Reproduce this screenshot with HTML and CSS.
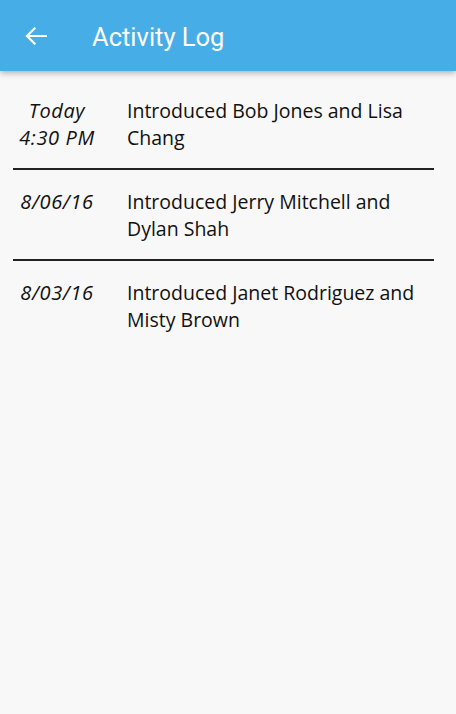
FILE: index.html
```html
<!DOCTYPE html>
<html lang="en">
<head>
<meta charset="utf-8">
<title>Activity Log</title>
<link rel="stylesheet" href="styles.css">
</head>
<body>
<header class="appbar">
  <button class="back" aria-label="Back">
    <svg width="22" height="18" viewBox="0 0 22 18"><path d="M21 9H2M9.5 1.5L2 9l7.5 7.5" fill="none" stroke="#fff" stroke-width="2.2" stroke-linecap="square"/></svg>
  </button>
  <h1 class="title">Activity Log</h1>
</header>
<main class="log">
  <div class="entry">
    <div class="when">Today<br>4:30 PM</div>
    <div class="what">Introduced Bob Jones and Lisa Chang</div>
  </div>
  <div class="entry">
    <div class="when">8/06/16</div>
    <div class="what">Introduced Jerry Mitchell and Dylan Shah</div>
  </div>
  <div class="entry">
    <div class="when">8/03/16</div>
    <div class="what">Introduced Janet Rodriguez and Misty Brown</div>
  </div>
</main>
</body>
</html>
```

FILE: styles.css
```css
html, body {
  margin: 0;
  height: 100%;
}
body {
  background: #f8f8f8;
  font-family: "Open Sans", "Noto Sans", sans-serif;
  color: #111;
}
.appbar {
  height: 71px;
  background: #46ade6;
  display: flex;
  align-items: center;
  box-shadow: 0 2px 6px rgba(0,0,0,0.3);
  position: relative;
}
.back {
  background: none;
  border: 0;
  padding: 0;
  margin: 0 0 0 24px;
  width: 24px;
  height: 24px;
  display: flex;
  align-items: center;
  justify-content: center;
}
.title {
  margin: 0 0 0 44px;
  font-family: Roboto, "Noto Sans", sans-serif;
  font-weight: 400;
  font-size: 25.5px;
  color: #fff;
  position: relative;
  top: 1px;
}
.log {
  padding: 8px 22px 0 13px;
}
.entry {
  display: flex;
  padding: 18px 0 17px;
  font-size: 19.5px;
  line-height: 27px;
}
.entry + .entry {
  border-top: 2px solid #222;
}
.when {
  width: 88px;
  flex: none;
  text-align: center;
  font-style: italic;
  font-size: 20px;
  letter-spacing: 0.6px;
}
.what {
  margin-left: 26px;
  flex: 1;
}
```
